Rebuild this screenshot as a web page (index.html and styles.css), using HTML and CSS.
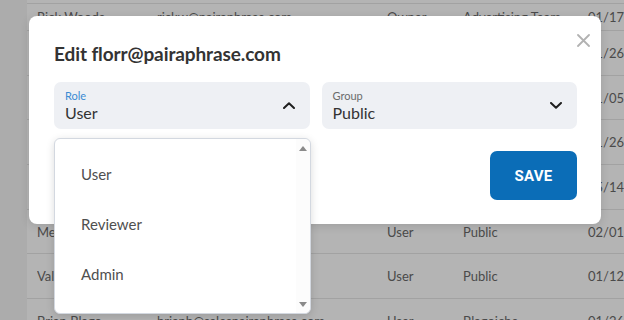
FILE: index.html
```html
<!DOCTYPE html>
<html lang="en">
<head>
<meta charset="utf-8">
<title>Edit user</title>
<link rel="stylesheet" href="styles.css">
</head>
<body>
<div class="screen">
  <aside class="rail"></aside>
  <main class="table">
    <div class="thead"></div>
    <div class="row first"><span>Rick Woods</span><span>rickw@pairaphrase.com</span><span>Owner</span><span>Advertising Team</span><span class="date">01/17/2023</span></div>
    <div class="row"><span>Lisa Chen</span><span>lisac@pairaphrase.com</span><span>Admin</span><span>Advertising Team</span><span class="date">01/26/2023</span></div>
    <div class="row"><span>Florr Ramos</span><span>florr@pairaphrase.com</span><span>User</span><span>Public</span><span class="date">01/05/2023</span></div>
    <div class="row"><span>Tom Price</span><span>tomp@pairaphrase.com</span><span>Reviewer</span><span>Public</span><span class="date">01/26/2023</span></div>
    <div class="row"><span>Ana Silva</span><span>anas@pairaphrase.com</span><span>User</span><span>Public</span><span class="date">05/14/2022</span></div>
    <div class="row"><span>Megan Hart</span><span>meganh@pairaphrase.com</span><span>User</span><span>Public</span><span class="date">02/01/2023</span></div>
    <div class="row"><span>Valerie Kim</span><span>valeriek@pairaphrase.com</span><span>User</span><span>Public</span><span class="date">01/12/2023</span></div>
    <div class="row"><span>Brian Blago</span><span>brianb@salespairaphrase.com</span><span>User</span><span>Blagoiche</span><span class="date">01/26/2023</span></div>
  </main>

  <section class="modal">
    <div class="modal-head">
      <h1 class="title">Edit florr@pairaphrase.com</h1>
      <button class="close" aria-label="Close">
        <svg viewBox="0 0 13 13" width="13" height="13"><path d="M1 1 L12 12 M12 1 L1 12" stroke="#b2b2b2" stroke-width="1.8" stroke-linecap="round" fill="none"/></svg>
      </button>
    </div>
    <div class="fields">
      <div class="field open">
        <div class="field-text">
          <span class="label blue">Role</span>
          <span class="value">User</span>
        </div>
        <svg class="chev" viewBox="0 0 12 7" width="12" height="7"><path d="M1 6 L6 1.2 L11 6" stroke="#1f1f1f" stroke-width="2" fill="none" stroke-linecap="round" stroke-linejoin="round"/></svg>
        <div class="menu">
          <ul class="options">
            <li>User</li>
            <li>Reviewer</li>
            <li>Admin</li>
          </ul>
          <div class="scrollbar">
            <span class="arrow up"></span>
            <span class="arrow down"></span>
          </div>
        </div>
      </div>
      <div class="field">
        <div class="field-text">
          <span class="label">Group</span>
          <span class="value">Public</span>
        </div>
        <svg class="chev" viewBox="0 0 12 7" width="12" height="7"><path d="M1 1 L6 5.8 L11 1" stroke="#1f1f1f" stroke-width="2" fill="none" stroke-linecap="round" stroke-linejoin="round"/></svg>
      </div>
    </div>
    <div class="actions">
      <button class="save">SAVE</button>
    </div>
  </section>
</div>
</body>
</html>
```

FILE: styles.css
```css
* { box-sizing: border-box; }
html, body { margin: 0; padding: 0; }
body {
  width: 624px;
  height: 320px;
  overflow: hidden;
  font-family: Lato, "Noto Sans", sans-serif;
  background: #b4b4b4;
}
.screen {
  position: relative;
  display: flex;
  width: 624px;
  height: 320px;
  overflow: hidden;
}
.rail {
  width: 27px;
  flex: none;
  background: #acacac;
}
.table {
  flex: 1;
  min-width: 0;
  background: #b4b4b4;
  color: #4a4a4a;
  font-size: 13px;
}
.thead {
  height: 4px;
  border-bottom: 1px solid #a2a2a2;
}
.row {
  display: grid;
  grid-template-columns: 120px 230px 76px 125px 60px;
  align-items: center;
  height: 44.7px;
  padding-left: 10px;
  border-bottom: 1px solid #a2a2a2;
  white-space: nowrap;
}
.row.first { height: 27px; }
.row span { overflow: hidden; }
.row span.date { overflow: visible; }

.modal {
  position: absolute;
  left: 29px;
  top: 16px;
  width: 572px;
  height: 208px;
  background: #fff;
  border-radius: 8px;
  padding: 0 24px 24px 25px;
  display: flex;
  flex-direction: column;
  box-shadow: 0 2px 10px rgba(0,0,0,0.12);
}
.modal-head {
  height: 66px;
  display: flex;
  justify-content: space-between;
  align-items: flex-start;
}
.title {
  margin: 26px 0 0;
  font-size: 19px;
  line-height: 24px;
  font-weight: 700;
  color: #333;
  letter-spacing: -0.1px;
}
.close {
  margin: 18px -13px 0 0;
  padding: 0;
  border: 0;
  background: none;
  width: 13px;
  height: 13px;
  display: flex;
}
.fields {
  display: grid;
  grid-template-columns: 1fr 1fr;
  gap: 12px;
  height: 47px;
}
.field {
  position: relative;
  background: #eef0f4;
  border-radius: 7px;
  display: flex;
  align-items: center;
  justify-content: space-between;
  padding: 0 15px 0 11px;
}
.field-text {
  display: flex;
  flex-direction: column;
  padding-top: 1px;
}
.label {
  font-size: 11px;
  line-height: 13px;
  color: #6b6b6b;
}
.label.blue { color: #3b8bd3; }
.value {
  font-size: 16px;
  line-height: 20px;
  margin-top: 1px;
  color: #333;
}
.chev { flex: none; }

.menu {
  position: absolute;
  left: 0;
  top: 56px;
  width: calc(100% + 1px);
  height: 176px;
  background: #fff;
  border: 1px solid #d3d8e0;
  border-radius: 6px;
  box-shadow: 0 2px 8px rgba(0,0,0,0.14);
  display: flex;
  z-index: 2;
}
.options {
  flex: 1;
  list-style: none;
  margin: 0;
  padding: 10px 0 0 26px;
}
.options li {
  font-size: 15px;
  line-height: 50px;
  color: #4f4f4f;
}
.scrollbar {
  width: 14px;
  display: flex;
  flex-direction: column;
  justify-content: space-between;
  align-items: center;
  padding: 7px 0 6px;
  background: #fcfcfc;
  border-radius: 0 6px 6px 0;
}
.arrow {
  width: 0;
  height: 0;
  border-left: 4px solid transparent;
  border-right: 4px solid transparent;
}
.arrow.up { border-bottom: 5px solid #8a8a8a; }
.arrow.down { border-top: 5px solid #8a8a8a; }

.actions {
  display: flex;
  justify-content: flex-end;
  margin-top: 22px;
}
.save {
  width: 87px;
  height: 49px;
  border: 0;
  border-radius: 7px;
  background: #0b6db7;
  color: #fff;
  font-family: Roboto, "Liberation Sans", sans-serif;
  font-weight: 700;
  font-size: 15px;
  letter-spacing: 0.2px;
  padding: 0;
}
```
